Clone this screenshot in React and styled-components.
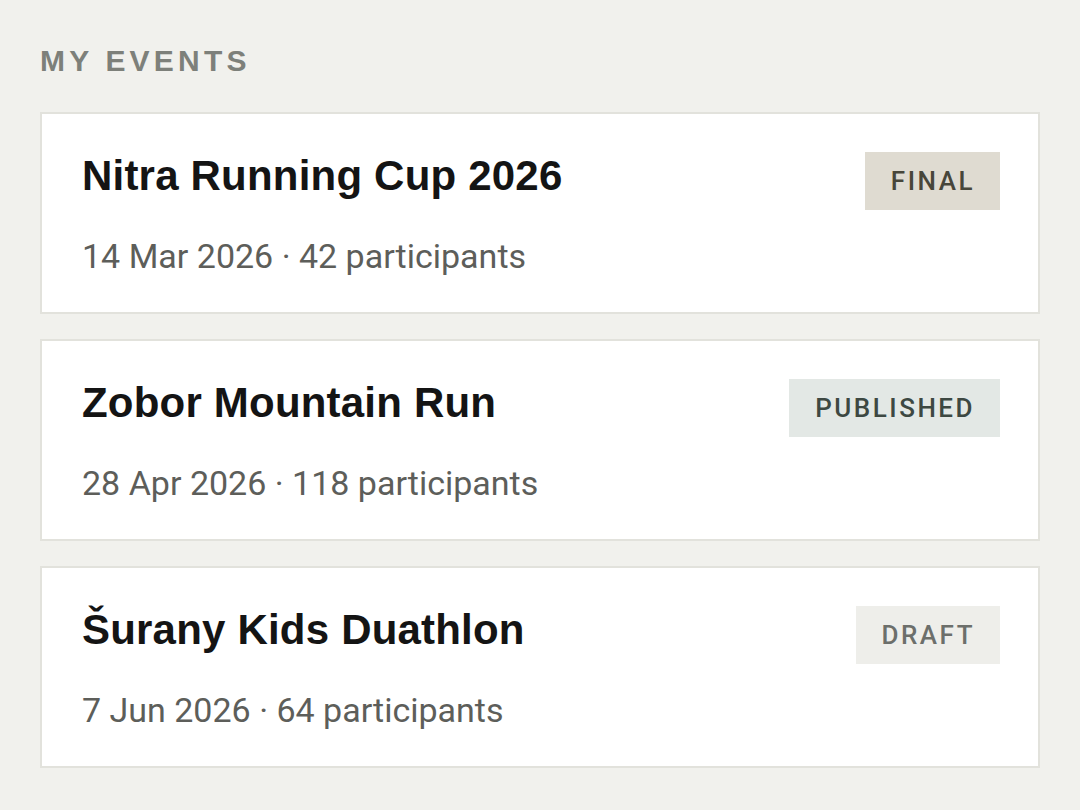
import React from 'react';
import styled, { createGlobalStyle } from 'styled-components';

const GlobalStyle = createGlobalStyle`
    html, body {
        margin: 0;
        padding: 0;
        background: #f1f1ed;
    }
    * {
        box-sizing: border-box;
    }
`;

const events = [
    { name: 'Nitra Running Cup 2026', date: '14 Mar 2026', count: 42, status: 'final' },
    { name: 'Zobor Mountain Run', date: '28 Apr 2026', count: 118, status: 'published' },
    { name: 'Šurany Kids Duathlon', date: '7 Jun 2026', count: 64, status: 'draft' },
];

const badgeColors = {
    final: { bg: '#dfdbd1', fg: '#47463a' },
    published: { bg: '#e3e8e5', fg: '#3d4842' },
    draft: { bg: '#eeeeea', fg: '#6c6f6b' },
};

function App() {
    return (
        <>
            <GlobalStyle />
            <Page>
                <Heading>My Events</Heading>
                <List>
                    {events.map((ev) => (
                        <Card key={ev.name}>
                            <TopRow>
                                <Title>{ev.name}</Title>
                                <Badge $status={ev.status}>{ev.status}</Badge>
                            </TopRow>
                            <Meta>
                                {ev.date} · {ev.count} participants
                            </Meta>
                        </Card>
                    ))}
                </List>
            </Page>
        </>
    );
}

const Page = styled.main`
    padding: 44px 40px 40px;
    min-height: 810px;
    font-family: 'Liberation Sans', Arial, sans-serif;
`;

const Heading = styled.h2`
    margin: 0 0 34px;
    font-size: 30px;
    font-weight: 700;
    letter-spacing: 4.2px;
    text-transform: uppercase;
    color: #7d807a;
    line-height: 34px;
`;

const List = styled.div`
    display: flex;
    flex-direction: column;
    gap: 25px;
`;

const Card = styled.div`
    background: #fff;
    border: 2px solid #e2e2dc;
    height: 202px;
    padding: 38px 38px 0 40px;
`;

const TopRow = styled.div`
    display: flex;
    justify-content: space-between;
    align-items: flex-start;
`;

const Title = styled.h3`
    margin: -1px 0 0;
    font-size: 42px;
    font-weight: 700;
    color: #141414;
    line-height: 50px;
    letter-spacing: 0.2px;
`;

const Badge = styled.span`
    display: inline-flex;
    align-items: center;
    height: 58px;
    padding: 0 25px 0 26px;
    background: ${(p) => badgeColors[p.$status].bg};
    color: ${(p) => badgeColors[p.$status].fg};
    font-family: 'Roboto', 'Liberation Sans', sans-serif;
    font-weight: 500;
    font-size: 26px;
    letter-spacing: 2.5px;
    text-transform: uppercase;
`;

const Meta = styled.div`
    margin-top: 24px;
    font-family: 'Roboto', 'Liberation Sans', sans-serif;
    font-size: 34px;
    letter-spacing: 0;
    color: #5d5e5a;
    line-height: 44px;
`;

export default App;
